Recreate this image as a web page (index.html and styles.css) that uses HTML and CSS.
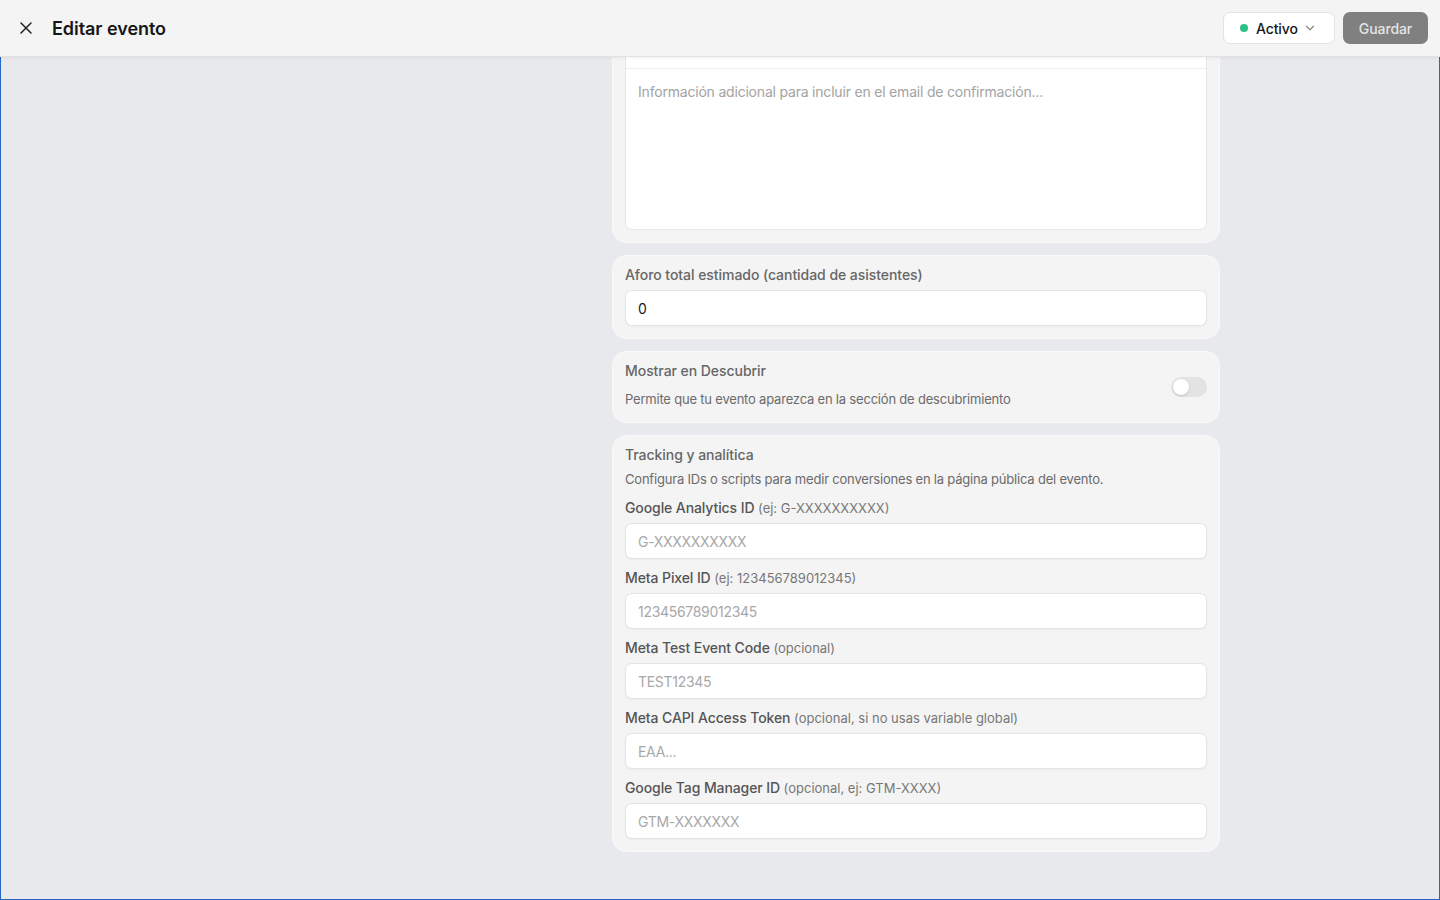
FILE: index.html
```html
<!DOCTYPE html>
<html lang="es">
<head>
<meta charset="utf-8">
<title>Editar evento</title>
<link rel="stylesheet" href="styles.css">
</head>
<body>
<header class="topbar">
  <div class="topbar-left">
    <button class="icon-btn" aria-label="Cerrar">
      <svg width="14" height="14" viewBox="0 0 14 14"><path d="M2 2L12 12M12 2L2 12" stroke="#222" stroke-width="1.5" stroke-linecap="round"/></svg>
    </button>
    <h1 class="title">Editar evento</h1>
  </div>
  <div class="topbar-right">
    <button class="status-btn">
      <span class="dot"></span>
      <span>Activo</span>
      <svg width="12" height="12" viewBox="0 0 12 12"><path d="M2.5 4.25L6 7.75L9.5 4.25" fill="none" stroke="#888" stroke-width="1.2" stroke-linecap="round" stroke-linejoin="round"/></svg>
    </button>
    <button class="save-btn">Guardar</button>
  </div>
</header>
<main class="main">
  <div class="layout">
    <div class="side"></div>
    <div class="form">
      <section class="card card-editor">
        <div class="editor">
          <div class="editor-toolbar"></div>
          <div class="editor-body">Información adicional para incluir en el email de confirmación...</div>
        </div>
      </section>

      <section class="card card-aforo">
        <label class="label">Aforo total estimado (cantidad de asistentes)</label>
        <div class="input value">0</div>
      </section>

      <section class="card card-toggle">
        <div class="toggle-text">
          <div class="label">Mostrar en Descubrir</div>
          <div class="desc">Permite que tu evento aparezca en la sección de descubrimiento</div>
        </div>
        <div class="switch"><span class="knob"></span></div>
      </section>

      <section class="card card-tracking">
        <div class="label">Tracking y analítica</div>
        <div class="desc">Configura IDs o scripts para medir conversiones en la página pública del evento.</div>
        <div class="field">
          <div class="flabel">Google Analytics ID <span class="hint">(ej: G-XXXXXXXXXX)</span></div>
          <div class="input ph">G-XXXXXXXXXX</div>
        </div>
        <div class="field">
          <div class="flabel">Meta Pixel ID <span class="hint">(ej: 123456789012345)</span></div>
          <div class="input ph">123456789012345</div>
        </div>
        <div class="field">
          <div class="flabel">Meta Test Event Code <span class="hint">(opcional)</span></div>
          <div class="input ph">TEST12345</div>
        </div>
        <div class="field">
          <div class="flabel">Meta CAPI Access Token <span class="hint">(opcional, si no usas variable global)</span></div>
          <div class="input ph">EAA...</div>
        </div>
        <div class="field">
          <div class="flabel">Google Tag Manager ID <span class="hint">(opcional, ej: GTM-XXXX)</span></div>
          <div class="input ph">GTM-XXXXXXX</div>
        </div>
      </section>
    </div>
  </div>
</main>
</body>
</html>
```

FILE: styles.css
```css
* { box-sizing: border-box; }
html, body { margin: 0; padding: 0; height: 100%; }
body {
  font-family: Inter, "Noto Sans", sans-serif;
  background: #e8e9ec;
  color: #1a1a1a;
  overflow: hidden;
}
.topbar {
  height: 57px;
  background: #f4f4f4;
  border-bottom: 1px solid #e2e2e2;
  display: flex;
  align-items: center;
  justify-content: space-between;
  padding: 0 12px 0 18px;
  position: relative;
  z-index: 2;
  box-shadow: 0 2px 2px rgba(0,0,0,0.03);
}
.topbar-left { display: flex; align-items: center; gap: 18px; }
.icon-btn {
  border: 0; background: none; padding: 0; width: 16px; height: 16px;
  display: flex; align-items: center; justify-content: center;
}
.title { margin: 0; font-size: 18px; font-weight: 600; letter-spacing: -0.05px; color: #161616; }
.topbar-right { display: flex; align-items: center; gap: 8px; }
.status-btn {
  height: 32px; width: 112px;
  background: #fff;
  border: 1px solid #e2e2e2;
  border-radius: 7px;
  display: flex; align-items: center; gap: 8px;
  padding: 0 0 0 16px;
  font-family: inherit; font-size: 14px; font-weight: 500; color: #161616;
  letter-spacing: -0.1px;
}
.status-btn svg { margin-left: -2px; }
.dot { width: 8px; height: 8px; border-radius: 50%; background: #2ebf8a; }
.save-btn {
  height: 32px; width: 85px;
  background: #808080;
  border: 0; border-radius: 7px;
  font-family: inherit; font-size: 14px; font-weight: 500; color: #e4e4e4;
  letter-spacing: -0.1px;
}
.main {
  height: calc(100% - 57px);
  border: 1px solid #2366c4;
  border-top: 0;
  overflow: hidden;
}
.layout {
  display: grid;
  grid-template-columns: 599px 608px;
  column-gap: 12px;
}
.form { display: flex; flex-direction: column; gap: 12px; }
.card {
  background: #f4f4f4;
  border: 1px solid #f8f8f8;
  border-radius: 14px;
  padding: 12px;
}
.card-editor { margin-top: -61px; }
.editor {
  background: #fff;
  border: 1px solid #e6e6e6;
  border-radius: 7px;
  overflow: hidden;
}
.editor-toolbar { height: 59px; border-bottom: 1px solid #eeeeee; }
.editor-body {
  height: 160px;
  padding: 14px 12px;
  font-size: 14px;
  letter-spacing: -0.2px;
  color: #a3a3a3;
}
.label {
  font-size: 14px; font-weight: 500; color: #666;
  display: block; line-height: 18px;
  letter-spacing: -0.05px;
}
.card-aforo { padding-top: 10px; }
.card-aforo .label { margin-bottom: 6px; }
.input {
  height: 36px;
  background: #fff;
  border: 1px solid #e4e4e4;
  border-radius: 7px;
  display: flex; align-items: center;
  padding: 0 12px;
  font-size: 14px;
  box-shadow: 0 1px 2px rgba(0,0,0,0.04);
}
.input.value { color: #1a1a1a; }
.input.ph { color: #a8a8a8; font-size: 14px; letter-spacing: -0.3px; }
.card-toggle {
  display: flex; align-items: center; justify-content: space-between;
  padding: 10px 12px 14px;
}
.card-toggle .label { margin: 0 0 10px; }
.desc { font-size: 13px; color: #6b6b6b; line-height: 18px; letter-spacing: -0.2px; }
.switch {
  width: 36px; height: 20px; border-radius: 10px;
  background: #e3e3e3;
  position: relative;
  margin-top: 3px;
}
.knob {
  position: absolute; left: 2px; top: 2px;
  width: 16px; height: 16px; border-radius: 50%;
  background: #fff;
  box-shadow: 0 1px 2px rgba(0,0,0,0.15);
}
.card-tracking { padding-top: 10px; }
.card-tracking .label { margin: 0 0 6px; }
.card-tracking .desc { margin-bottom: 11px; }
.field { margin-bottom: 10px; }
.field:last-child { margin-bottom: 0; }
.flabel {
  font-size: 14px; font-weight: 500; color: #555;
  line-height: 18px; margin-bottom: 6px;
  letter-spacing: -0.1px;
}
.hint { font-weight: 400; color: #777; font-size: 13px; letter-spacing: 0; }
```
